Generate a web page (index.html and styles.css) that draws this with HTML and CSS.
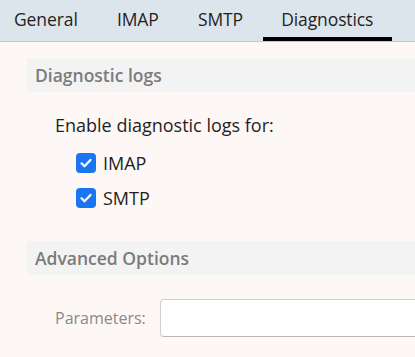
FILE: index.html
```html
<!DOCTYPE html>
<html lang="en">
<head>
<meta charset="utf-8">
<title>Account settings - Diagnostics</title>
<link rel="stylesheet" href="styles.css">
</head>
<body>
<div class="tabs">
  <div class="tab first">General</div>
  <div class="tab">IMAP</div>
  <div class="tab">SMTP</div>
  <div class="tab active">Diagnostics</div>
</div>
<div class="content">
  <div class="section-header">Diagnostic logs</div>
  <div class="intro">Enable diagnostic logs for:</div>
  <div class="checks">
    <label class="check"><span class="box"><svg viewBox="0 0 20 20" width="20" height="20"><path d="M5.5 10.3l3 3 6-6.4" fill="none" stroke="#fff" stroke-width="2.2" stroke-linecap="round" stroke-linejoin="round"/></svg></span>IMAP</label>
    <label class="check"><span class="box"><svg viewBox="0 0 20 20" width="20" height="20"><path d="M5.5 10.3l3 3 6-6.4" fill="none" stroke="#fff" stroke-width="2.2" stroke-linecap="round" stroke-linejoin="round"/></svg></span>SMTP</label>
  </div>
  <div class="section-header adv">Advanced Options</div>
  <div class="param-row">
    <span class="param-label">Parameters:</span>
    <span class="input"></span>
  </div>
</div>
</body>
</html>
```
FILE: styles.css
```css
html, body {
  margin: 0;
  padding: 0;
}
body {
  background: #fdf8f5;
  font-family: "Open Sans", "Noto Sans", sans-serif;
  color: #1f1f1f;
  width: 415px;
  height: 357px;
  overflow: hidden;
}
.tabs {
  display: flex;
  height: 41px;
  background: #dce5eb;
  border-bottom: 1px solid #c2c9ce;
  box-sizing: content-box;
}
.tab {
  font-size: 17.5px;
  padding: 7px 19.6px 0;
  height: 34px;
  box-sizing: content-box;
  line-height: 24px;
  color: #1f1f1f;
  position: relative;
  letter-spacing: -0.1px;
}
.tab.first {
  padding-left: 14px;
}
.tab.active {
  padding-left: 18.5px;
  padding-right: 18.5px;
}
.tab.active::after {
  content: "";
  position: absolute;
  left: 0;
  right: 0;
  bottom: 0;
  height: 4px;
  background: #000;
}
.content {
  padding: 16px 0 0 27px;
}
.section-header {
  height: 34px;
  background: #f3f3f3;
  padding-left: 8px;
  font-size: 17.5px;
  font-weight: 600;
  color: #7b7b7b;
  line-height: 35px;
}
.intro {
  margin: 22px 0 0 28px;
  font-size: 18px;
  line-height: 22px;
}
.checks {
  display: flex;
  flex-direction: column;
  gap: 15px;
  margin: 17px 0 0 49px;
}
.check {
  display: flex;
  align-items: center;
  gap: 7px;
  font-size: 18px;
  height: 20px;
}
.box {
  width: 20px;
  height: 20px;
  border-radius: 4px;
  background: #1877f0;
  display: block;
}
.box svg {
  display: block;
}
.adv {
  margin-top: 33px;
}
.param-row {
  display: flex;
  align-items: center;
  gap: 15px;
  margin: 24px 0 0 28px;
}
.param-label {
  width: 90px;
  text-align: right;
  color: #8a8a8a;
  font-size: 16px;
  white-space: nowrap;
}
.input {
  display: block;
  flex: 1;
  height: 38px;
  box-sizing: border-box;
  background: #fff;
  border: 1px solid #cfcfcf;
  border-right: none;
  border-bottom-color: #b9b9b9;
  border-radius: 4px 0 0 4px;
}
```
